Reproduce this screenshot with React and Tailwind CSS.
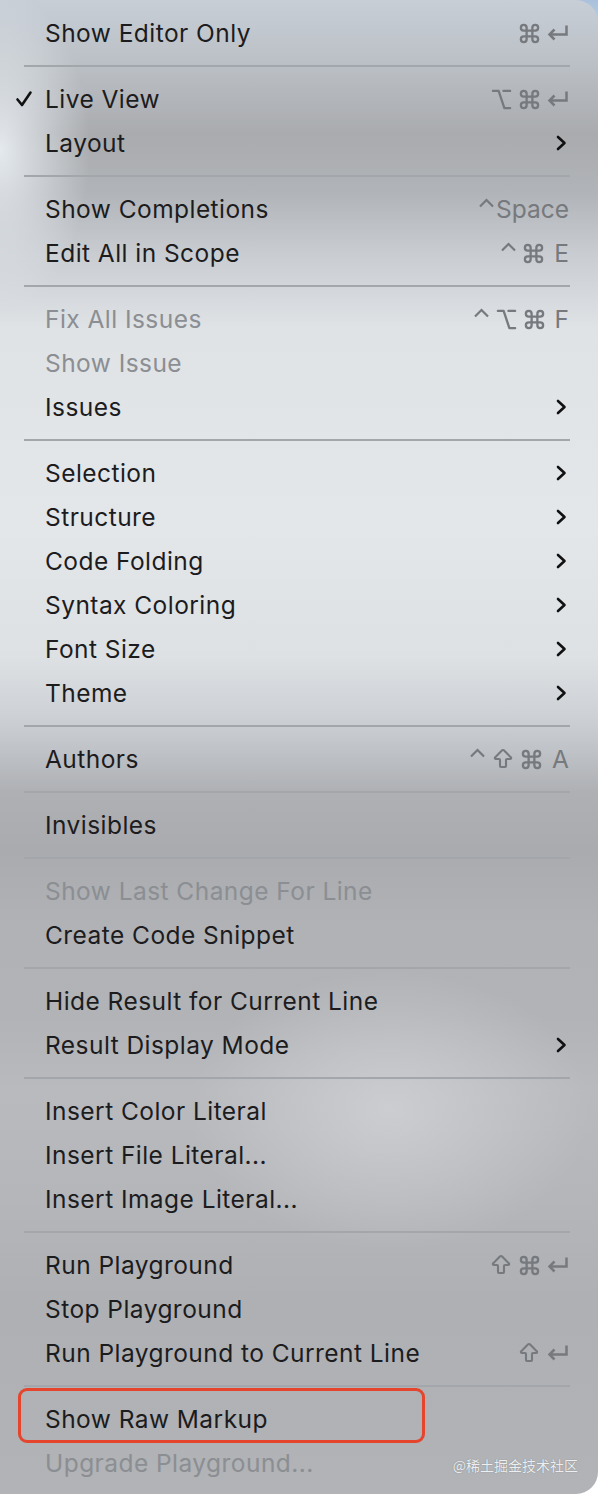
import React from "react";
import { Command, ArrowBigUp, Option } from "lucide-react";

const ReturnKey = () => (
  <svg width="23" height="18" viewBox="0 0 23 18" fill="none">
    <path d="M20.5 1.5 V10.5 H3.5" stroke="currentColor" strokeWidth="2.5" />
    <path d="M8.5 5.5 L3.5 10.5 L8.5 15.5" stroke="currentColor" strokeWidth="2.5" />
  </svg>
);

const Ctrl = () => (
  <svg width="17" height="20" viewBox="0 0 17 20" fill="none" className="self-start">
    <path d="M2 9.5 L8.5 3 L15 9.5" stroke="currentColor" strokeWidth="2.2" />
  </svg>
);

const Chevron = () => (
  <svg width="12" height="18" viewBox="0 0 12 18" fill="none">
    <path d="M3 3 L9.5 9 L3 15" stroke="#111" strokeWidth="2.6" strokeLinecap="round" strokeLinejoin="round" />
  </svg>
);

const Check = () => (
  <svg width="18" height="18" viewBox="0 0 18 18" fill="none">
    <path d="M2.5 9.5 L7 15 L15.5 2.5" stroke="#111" strokeWidth="2.6" strokeLinecap="round" strokeLinejoin="round" />
  </svg>
);

const Shortcut = ({ keys }) => (
  <div className="flex h-[24px] items-center gap-[5px] text-[#76797d]">
    {keys.map((k, i) => {
      if (k === "ret") return <ReturnKey key={i} />;
      if (k === "ctrl") return <Ctrl key={i} />;
      if (k === "cmd") return <Command key={i} size={23} strokeWidth={2.3} absoluteStrokeWidth />;
      if (k === "opt") return <Option key={i} size={23} strokeWidth={2.3} absoluteStrokeWidth />;
      if (k === "shift") return <ArrowBigUp key={i} size={24} strokeWidth={2.1} absoluteStrokeWidth strokeLinejoin="miter" />;
      return (
        <span key={i} className={`text-[24.5px] leading-none ${k.length === 1 ? "ml-[4px]" : "-ml-[4px]"}`}>
          {k}
        </span>
      );
    })}
  </div>
);

const groups = [
  [{ label: "Show Editor Only", keys: ["cmd", "ret"] }],
  [
    { label: "Live View", checked: true, keys: ["opt", "cmd", "ret"] },
    { label: "Layout", sub: true },
  ],
  [
    { label: "Show Completions", keys: ["ctrl", "Space"] },
    { label: "Edit All in Scope", keys: ["ctrl", "cmd", "E"] },
  ],
  [
    { label: "Fix All Issues", disabled: true, keys: ["ctrl", "opt", "cmd", "F"] },
    { label: "Show Issue", disabled: true },
    { label: "Issues", sub: true },
  ],
  [
    { label: "Selection", sub: true },
    { label: "Structure", sub: true },
    { label: "Code Folding", sub: true },
    { label: "Syntax Coloring", sub: true },
    { label: "Font Size", sub: true },
    { label: "Theme", sub: true },
  ],
  [{ label: "Authors", keys: ["ctrl", "shift", "cmd", "A"] }],
  [{ label: "Invisibles" }],
  [
    { label: "Show Last Change For Line", disabled: true },
    { label: "Create Code Snippet" },
  ],
  [
    { label: "Hide Result for Current Line" },
    { label: "Result Display Mode", sub: true },
  ],
  [
    { label: "Insert Color Literal" },
    { label: "Insert File Literal..." },
    { label: "Insert Image Literal..." },
  ],
  [
    { label: "Run Playground", keys: ["shift", "cmd", "ret"] },
    { label: "Stop Playground" },
    { label: "Run Playground to Current Line", keys: ["shift", "ret"] },
  ],
  [
    { label: "Show Raw Markup", marked: true },
    { label: "Upgrade Playground...", disabled: true },
  ],
];

const MenuItem = ({ item }) => (
  <div className="relative flex h-[44px] items-center pl-[45px] pr-[29px]">
    {item.checked && (
      <span className="absolute left-[15px] top-[13px]">
        <Check />
      </span>
    )}
    <span
      className={`flex-1 text-[24.5px] leading-none tracking-[0.45px] ${
        item.disabled ? "text-[#8b8e92]" : "text-[#1c1c1e]"
      }`}
    >
      {item.label}
    </span>
    {item.keys && <Shortcut keys={item.keys} />}
    {item.sub && (
      <span className="mr-[2px]">
        <Chevron />
      </span>
    )}
    {item.marked && (
      <span className="pointer-events-none absolute left-[18px] top-[-9px] h-[55px] w-[407px] rounded-[9px] border-[3px] border-[#e5452d]" />
    )}
  </div>
);

export default function App() {
  return (
    <div className="h-[1494px] w-[598px] bg-[linear-gradient(180deg,#a9c1dd_0%,#ffffff_8%,#ffffff_100%)] font-['Inter','Noto_Sans',sans-serif]">
      <div className="relative h-full w-full overflow-hidden rounded-r-[22px] bg-[radial-gradient(ellipse_90px_160px_at_0px_150px,rgba(235,240,244,0.9),rgba(235,240,244,0)),radial-gradient(ellipse_200px_140px_at_390px_1110px,rgba(205,207,210,0.9),rgba(205,207,210,0)),linear-gradient(180deg,#c7ced6_0%,#bcc1c7_4%,#a9abae_9%,#b1b4b8_13%,#c9cdd2_17%,#dfe3e6_22%,#e4e7ea_35%,#dde1e4_44%,#cdd1d5_48%,#aeb0b4_53%,#a9abaf_57%,#b0b2b6_62%,#b1b3b7_68%,#b8babe_73%,#b4b6ba_80%,#aeb0b4_87%,#b1b3b6_100%)] pt-[11px]">
        {groups.map((group, gi) => (
          <div key={gi}>
            {gi > 0 && (
              <div className="flex h-[22px] items-center pl-[24px] pr-[28px]">
                <div className="h-[2px] w-full bg-[#a3a6aa]" />
              </div>
            )}
            {group.map((item) => (
              <MenuItem key={item.label} item={item} />
            ))}
          </div>
        ))}
        <div className="absolute bottom-[18px] right-[20px] font-['Noto_Sans_CJK_SC',sans-serif] text-[14px] text-[#eceef0] [text-shadow:0_0_1px_rgba(90,90,90,0.7)]">
          @稀土掘金技术社区
        </div>
      </div>
    </div>
  );
}
